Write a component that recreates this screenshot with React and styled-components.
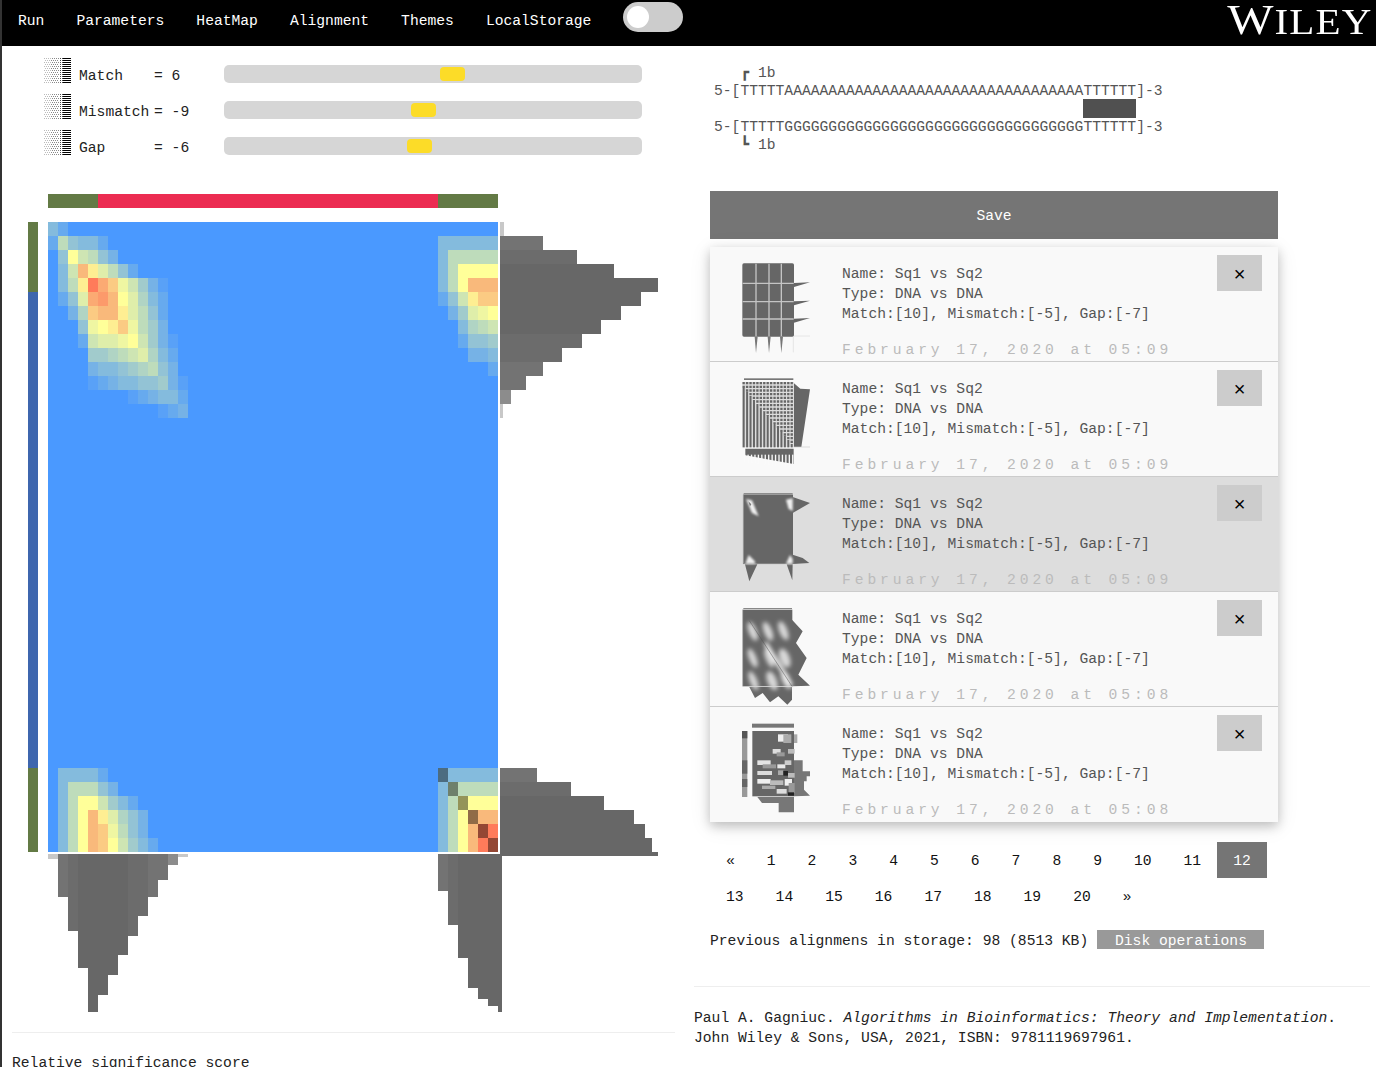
import React from 'react';
import styled, { createGlobalStyle } from 'styled-components';

const GlobalStyle = createGlobalStyle`
  html, body {
    margin: 0;
    height: 100%;
    overflow: hidden;
    background: #fff;
  }
  body {
    font-family: "Liberation Mono", monospace;
    font-size: 14.67px;
    line-height: 20px;
    color: #222;
  }
`;

const Page = styled.div`
  border-left: 2px solid #333;
  min-height: 1067px;
`;

const Nav = styled.nav`
  display: flex;
  align-items: flex-start;
  height: 46px;
  background: #000;
  color: #fff;
`;

const NavItem = styled.a`
  padding: 11px 16px 0;
  line-height: 20px;
`;

const Toggle = styled.div`
  width: 60px;
  height: 30px;
  margin: 2px 0 0 16px;
  padding: 4px;
  box-sizing: border-box;
  border-radius: 15px;
  background: #ccc;
`;

const Knob = styled.div`
  width: 22px;
  height: 22px;
  border-radius: 50%;
  background: #fff;
`;

const Logo = styled.div`
  margin-left: auto;
  margin-right: 3px;
  font-family: "Liberation Serif", serif;
  font-size: 36px;
  line-height: 40px;
  letter-spacing: 1px;
  transform: scaleX(1.14);
  transform-origin: right center;
  span {
    font-size: 43px;
  }
`;

const Columns = styled.div`
  display: flex;
`;

const LeftColumn = styled.section`
  width: 692px;
  flex: none;
`;

const RightColumn = styled.section`
  width: 676px;
  flex: none;
`;

const Sliders = styled.div`
  display: flex;
  flex-direction: column;
  gap: 10px;
  padding: 12px 0 0 42px;
`;

const SliderRow = styled.div`
  display: flex;
  align-items: flex-start;
  height: 26px;
`;

const SliderLabel = styled.span`
  width: 75px;
  margin: 8px 0 0 8px;
  white-space: pre;
`;

const SliderValue = styled.span`
  width: 70px;
  margin-top: 8px;
  white-space: pre;
`;

const Track = styled.div`
  display: flex;
  align-items: center;
  width: 418px;
  height: 18px;
  margin-top: 7px;
  border-radius: 5px;
  background: #d6d6d6;
`;

const Thumb = styled.div`
  width: 25px;
  height: 14px;
  margin-left: ${(p) => p.$offset}px;
  border-radius: 4px;
  background: #fcdc28;
`;

const Chart = styled.div`
  display: grid;
  grid-template-columns: 10px 10px 450px 162px;
  grid-template-rows: 14px 14px 630px 160px;
  margin: 38px 0 0 26px;
`;

const TopStrip = styled.div`
  grid-column: 3;
  grid-row: 1;
  display: flex;
`;

const LeftStrip = styled.div`
  grid-column: 1;
  grid-row: 3;
  display: flex;
  flex-direction: column;
`;

const StripPart = styled.div`
  flex: ${(p) => p.$cells};
  background: ${(p) => p.$color};
`;

const HeatSvg = styled.svg`
  grid-column: 3;
  grid-row: 3;
  display: block;
`;

const RightHist = styled.svg`
  grid-column: 4;
  grid-row: 3;
  display: block;
  overflow: visible;
`;

const BottomHist = styled.svg`
  grid-column: 3 / span 2;
  grid-row: 4;
  display: block;
  margin-top: 2px;
`;

const Rule = styled.hr`
  height: 1px;
  border: none;
  background: #eee;
  margin: ${(p) => p.$margin};
`;

const Caption = styled.div`
  padding-left: 10px;
  color: #222;
`;

const AlignBlock = styled.pre`
  margin: 18px 0 0 20px;
  font: inherit;
  line-height: 18px;
  color: #555;
`;

const Bond = styled.span`
  display: inline-block;
  width: 8.8px;
  height: 17px;
  margin-top: -1px;
  vertical-align: top;
  background: #505050;
  box-shadow: 0 1px 0 #505050, 0 2px 0 #505050;
`;

const SaveButton = styled.button`
  display: block;
  width: 568px;
  height: 48px;
  margin: 37px 0 0 16px;
  padding: 2px 0 0;
  border: none;
  background: #757575;
  color: #fff;
  font: inherit;
`;

const SavedList = styled.div`
  width: 568px;
  margin: 8px 0 0 16px;
  box-shadow: 0 4px 10px rgba(0, 0, 0, 0.2), 0 4px 20px rgba(0, 0, 0, 0.1);
`;

const SavedItem = styled.div`
  display: flex;
  align-items: flex-start;
  height: 115px;
  box-sizing: border-box;
  padding: 16px 16px 0 32px;
  background: ${(p) => (p.$selected ? '#ddd' : '#f9f9f9')};
  border-bottom: ${(p) => (p.$last ? 'none' : '1px solid #ccc')};
`;

const ThumbSvg = styled.svg`
  display: block;
  flex: none;
  width: 68px;
  height: 90px;
  margin-right: 32px;
  overflow: visible;
  filter: blur(${(p) => p.$blur || 0.45}px);
`;

const ItemText = styled.div`
  margin-top: 1px;
  color: #555;
  white-space: nowrap;
`;

const ItemDate = styled.div`
  margin-top: 16px;
  color: #bbb;
  letter-spacing: 3.9px;
`;

const CloseButton = styled.button`
  width: 45px;
  height: 36px;
  margin: -8px 0 0 auto;
  padding: 2px 0 0;
  border: none;
  background: #ccc;
  color: #000;
  font-family: "Liberation Sans", sans-serif;
  font-size: 20px;
`;

const Pagination = styled.div`
  display: flex;
  flex-wrap: wrap;
  width: 568px;
  margin: 20px 0 0 16px;
`;

const PageLink = styled.a`
  padding: 9px 16px 7px;
  color: ${(p) => (p.$active ? '#fff' : '#111')};
  background: ${(p) => (p.$active ? '#757575' : 'transparent')};
`;

const StorageLine = styled.div`
  display: flex;
  align-items: flex-start;
  height: 19px;
  line-height: 22px;
  margin: 16px 0 0 16px;
  white-space: pre;
`;

const DiskButton = styled.span`
  height: 19px;
  margin-left: 8.8px;
  padding: 0 17px 0 18px;
  background: #999;
  color: #fff;
`;

const Citation = styled.p`
  margin: 21px 0 0;
  color: #222;
`;

// colour ramp of the score matrix, 0 = blue, 20 = red
const STOPS = [
  [0, [0x4a, 0x99, 0xff]],
  [8, [0xbe, 0xdc, 0xbb]],
  [12, [0xff, 0xff, 0x99]],
  [16, [0xf9, 0xb9, 0x7b]],
  [20, [0xff, 0x7b, 0x5a]],
];

function rampColor(v) {
  for (let i = 1; i < STOPS.length; i++) {
    if (v <= STOPS[i][0]) {
      const [a, ca] = STOPS[i - 1];
      const [b, cb] = STOPS[i];
      const t = (v - a) / (b - a);
      const c = ca.map((x, k) => Math.round(x + (cb[k] - x) * t));
      return `rgb(${c.join(',')})`;
    }
  }
  return 'rgb(255,123,90)';
}

// [row, first column, values]
const HEAT = [
  [0, 0, [4, 2]],
  [1, 0, [2, 8, 5, 4, 4, 2]],
  [2, 1, [5, 12, 9, 8, 5, 3]],
  [3, 1, [4, 9, 16, 13, 10, 8, 5, 2]],
  [4, 1, [4, 8, 13, 20, 17, 15, 11, 9, 6, 3, 1]],
  [5, 1, [2, 5, 10, 17, 18, 16, 12, 10, 7, 4, 2]],
  [6, 2, [3, 7, 15, 16, 16, 13, 10, 8, 5, 2]],
  [7, 3, [5, 11, 12, 13, 15, 11, 8, 6, 3]],
  [8, 3, [2, 9, 10, 10, 11, 12, 9, 6, 3, 1]],
  [9, 4, [6, 6, 7, 8, 9, 10, 7, 4, 2]],
  [10, 4, [3, 4, 4, 5, 6, 7, 8, 5, 3]],
  [11, 4, [1, 2, 3, 4, 4, 5, 5, 6, 3, 1]],
  [12, 8, [1, 2, 3, 4, 4, 2]],
  [13, 11, [1, 2, 3]],
  [1, 39, [4, 4, 4, 4, 4, 4]],
  [2, 39, [4, 8, 8, 8, 8, 8]],
  [3, 39, [4, 8, 12, 12, 12, 12]],
  [4, 39, [4, 8, 12, 16, 16, 16]],
  [5, 39, [2, 5, 9, 13, 15, 15]],
  [6, 40, [3, 6, 10, 11, 12]],
  [7, 41, [4, 7, 8, 9]],
  [8, 41, [2, 5, 5, 6]],
  [9, 42, [3, 3, 4]],
  [10, 44, [2]],
  [39, 1, [4, 4, 4, 4, 2]],
  [40, 1, [4, 8, 8, 8, 5, 3]],
  [41, 1, [4, 8, 12, 12, 9, 6, 4, 2]],
  [42, 1, [4, 8, 12, 16, 13, 10, 7, 5, 3]],
  [43, 1, [4, 8, 12, 16, 15, 11, 8, 5, 3]],
  [44, 1, [4, 8, 12, 16, 15, 12, 9, 6, 4, 2]],
  [39, 39, [4, 4, 4, 4, 4, 4]],
  [40, 39, [4, 8, 8, 8, 8, 8]],
  [41, 39, [4, 8, 12, 12, 12, 12]],
  [42, 39, [4, 8, 12, 16, 16, 16]],
  [43, 39, [4, 8, 12, 16, 20, 20]],
  [44, 39, [4, 8, 12, 16, 20, 20]],
];

const HIST_START = [43, 77, 114, 158, 141, 121, 101, 82, 62, 43, 26, 11, 3];
const HIST_END = [37, 71, 104, 134, 145, 152];

function barColor(v) {
  if (v < 6) return '#c8c8c8';
  if (v < 15) return '#8c8c8c';
  if (v < 50) return '#737373';
  if (v < 90) return '#6c6c6c';
  return '#676767';
}

function HeatMap() {
  const path = [0, 1, 2, 3, 4, 5];
  return (
    <HeatSvg width="450" height="630" shapeRendering="crispEdges">
      <rect width="450" height="630" fill="#4a99ff" />
      {HEAT.map(([row, col, vals]) =>
        vals.map((v, i) => (
          <rect key={`${row}-${col + i}`} x={(col + i) * 10} y={row * 14} width="10" height="14" fill={rampColor(v)} />
        ))
      )}
      {path.map((i) => (
        <rect key={i} x={(39 + i) * 10} y={(39 + i) * 14} width="10" height="14" fill="#000" opacity="0.42" />
      ))}
    </HeatSvg>
  );
}

function RowHistogram() {
  return (
    <RightHist width="162" height="630" shapeRendering="crispEdges">
      <rect x="2" y="0" width="4" height="14" fill="#c8c8c8" />
      {HIST_START.map((v, i) => (
        <rect key={i} x="2" y={(i + 1) * 14} width={v} height="14" fill={barColor(v)} />
      ))}
      {HIST_END.map((v, i) => (
        <rect key={i} x="2" y={(i + 39) * 14} width={v} height="14" fill={barColor(v)} />
      ))}
      <rect x="2" y="630" width="158" height="4" fill="#676767" />
    </RightHist>
  );
}

function ColumnHistogram() {
  return (
    <BottomHist width="612" height="158" shapeRendering="crispEdges">
      <rect x="0" y="0" width="10" height="5" fill="#c8c8c8" />
      {HIST_START.map((v, i) => (
        <rect key={i} x={(i + 1) * 10} y="0" width="10" height={v} fill={barColor(v)} />
      ))}
      {HIST_END.map((v, i) => (
        <rect key={i} x={(i + 39) * 10} y="0" width="10" height={v} fill={barColor(v)} />
      ))}
      <rect x="450" y="0" width="4" height="158" fill="#676767" />
    </BottomHist>
  );
}

function ditherPixels() {
  const out = [];
  for (let y = 0; y < 26; y += 2) {
    for (let x = 0; x < 27; x++) {
      let on;
      let fill = '#000';
      if (x >= 19) on = true;
      else if (x >= 15) {
        on = x % 2 === 0 || x > 17;
        fill = '#444';
      } else {
        on = (x + y / 2) % 2 === 0;
        fill = x < 7 ? '#bbb' : '#888';
      }
      if (on) out.push({ x, y, fill });
    }
  }
  return out;
}

const DITHER = ditherPixels();

function DitherIcon() {
  return (
    <svg width="27" height="26" shapeRendering="crispEdges" style={{ flex: 'none' }}>
      {DITHER.map((p) => (
        <rect key={`${p.x}-${p.y}`} x={p.x} y={p.y} width="1" height="1" fill={p.fill} />
      ))}
    </svg>
  );
}

// thumbnails use a 204x270 box, three units a pixel
function ThumbGrid() {
  const cols = [42, 81, 118];
  const rows = [61, 116, 168];
  return (
    <ThumbSvg viewBox="0 0 204 270">
      <rect x="1" y="1" width="155" height="220" rx="5" fill="#666" />
      {cols.map((x) => (
        <g key={x}>
          <line x1={x} y1="2" x2={x} y2="220" stroke="#c4c4c4" strokeWidth="4" />
          <polygon points={`${x - 4},221 ${x + 5},221 ${x},270`} fill="#777" />
        </g>
      ))}
      {rows.map((y) => (
        <g key={y}>
          <line x1="2" y1={y} x2="155" y2={y} stroke="#c4c4c4" strokeWidth="4" />
          <polygon points={`156,${y + 11} 156,${y - 1} 204,${y - 3}`} fill="#666" />
        </g>
      ))}
      <line x1="156" y1="219" x2="204" y2="219" stroke="#ddd" strokeWidth="2" />
      <line x1="154" y1="221" x2="154" y2="268" stroke="#ddd" strokeWidth="2" />
    </ThumbSvg>
  );
}

function ThumbStripes() {
  const cols = Array.from({ length: 15 }, (_, i) => i);
  return (
    <ThumbSvg viewBox="0 0 204 270">
      <rect x="6" y="1" width="148" height="5" fill="#777" />
      <polygon points="156,16 175,32 204,34 178,207 156,207" fill="#666" />
      <polygon points="10,212 155,212 155,258 10,232" fill="#666" />
      <rect x="1" y="12" width="155" height="196" fill="#ddd" />
      {cols.map((i) => {
        const x = 2 + i * 10.3;
        const cut = 30 + i * 12;
        return (
          <g key={i}>
            <rect x={x} y={cut} width="6" height={208 - cut} fill="#666" />
            <line x1={x + 3} y1="12" x2={x + 3} y2={cut} stroke="#666" strokeWidth="7" strokeDasharray="7 4" />
            <rect x={x + 4} y="230" width="4" height={i * 1.2 + 22} fill="#fafafa" />
          </g>
        );
      })}
      <line x1="156" y1="207" x2="204" y2="207" stroke="#ccc" strokeWidth="2" />
    </ThumbSvg>
  );
}

function ThumbBlock() {
  return (
    <ThumbSvg viewBox="0 0 204 270">
      <defs>
        <filter id="soft3">
          <feGaussianBlur stdDeviation="3.5" />
        </filter>
      </defs>
      <rect x="5" y="1" width="147" height="3" fill="#666" />
      <rect x="3" y="5" width="150" height="208" fill="#666" />
      <line x1="4" y1="5" x2="4" y2="212" stroke="#aaa" strokeWidth="2.5" />
      <line x1="4" y1="212" x2="152" y2="212" stroke="#999" strokeWidth="2" />
      <polygon points="152,12 204,30 152,60" fill="#666" />
      <polygon points="152,185 182,195 202,210 152,213" fill="#666" />
      <polygon points="9,214 46,214 22,265" fill="#666" />
      <polygon points="134,214 152,214 151,262" fill="#666" />
      <g filter="url(#soft3)" fill="#f0f0f0">
        <polygon points="12,18 30,22 50,70 30,60" />
        <polygon points="132,20 152,16 152,54 140,48" />
        <polygon points="10,212 20,186 38,204 40,212" />
        <polygon points="132,212 144,186 152,198 152,212" />
      </g>
      <polygon points="19,25 28,34 24,40" fill="#777" />
    </ThumbSvg>
  );
}

function ThumbWaves() {
  const blobs = [
    [32, 70, 6],
    [78, 70, 6],
    [124, 68, 6],
    [32, 150, 5],
    [82, 150, 5],
    [128, 150, 9],
    [34, 218, 5],
    [90, 218, 8],
    [132, 215, 6],
  ];
  return (
    <ThumbSvg viewBox="0 0 204 270">
      <defs>
        <filter id="soft4">
          <feGaussianBlur stdDeviation="7" />
        </filter>
      </defs>
      <rect x="4" y="0" width="146" height="3" fill="#888" />
      <rect x="2" y="5" width="149" height="230" fill="#666" />
      <line x1="2" y1="5" x2="2" y2="235" stroke="#aaa" strokeWidth="2" />
      <polygon points="150,35 182,70 162,105 194,150 169,200 204,233 150,235" fill="#666" />
      <polygon points="22,237 150,237 150,275 136,290 109,265 84,283 62,255 39,270" fill="#666" />
      <g filter="url(#soft4)" fill="#d8d8d8">
        {blobs.map(([x, y, w]) => (
          <ellipse key={`${x}-${y}`} cx={x} cy={y} rx={w + 6} ry="30" transform={`rotate(-22 ${x} ${y})`} />
        ))}
        <line x1="70" y1="105" x2="148" y2="232" stroke="#f4f4f4" strokeWidth="12" />
      </g>
      <line x1="22" y1="38" x2="150" y2="235" stroke="#555" strokeWidth="1.5" />
    </ThumbSvg>
  );
}

function ThumbTable() {
  const blocks = [
    [108, 34, 30, 22, '#eee'],
    [124, 34, 24, 26, '#aaa'],
    [92, 78, 24, 14, '#ddd'],
    [104, 88, 24, 12, '#999'],
    [138, 78, 20, 14, '#bbb'],
    [46, 112, 40, 14, '#e4e4e4'],
    [62, 124, 40, 12, '#999'],
    [106, 124, 24, 12, '#e8e8e8'],
    [128, 112, 20, 14, '#ccc'],
    [46, 144, 44, 12, '#ddd'],
    [108, 142, 16, 14, '#aaa'],
    [124, 144, 14, 14, '#222'],
    [138, 150, 20, 14, '#bbb'],
    [46, 168, 40, 14, '#eee'],
    [84, 172, 40, 14, '#bbb'],
    [128, 168, 22, 20, '#f0f0f0'],
    [60, 188, 40, 10, '#aaa'],
    [104, 198, 30, 14, '#ddd'],
    [140, 180, 18, 30, '#999'],
    [138, 208, 18, 10, '#222'],
  ];
  return (
    <ThumbSvg viewBox="0 0 204 270" $blur={0.7}>
      <rect x="30" y="2" width="126" height="12" fill="#777" />
      <rect x="0" y="24" width="16" height="198" fill="#999" />
      <rect x="0" y="24" width="16" height="22" fill="#555" />
      <rect x="0" y="112" width="16" height="40" fill="#666" />
      <rect x="0" y="168" width="16" height="24" fill="#666" />
      <rect x="31" y="24" width="125" height="196" fill="#666" />
      <polygon points="156,34 166,34 166,60 156,60" fill="#aaa" />
      <polygon points="156,112 182,112 182,145 204,145 204,160 194,160 194,175 186,175 186,200 204,218 156,220" fill="#777" />
      <polygon points="46,222 156,222 156,268 110,268 110,240 60,240" fill="#777" />
      {blocks.map(([x, y, w, h, c]) => (
        <rect key={`${x}-${y}`} x={x} y={y} width={w} height={h} fill={c} />
      ))}
    </ThumbSvg>
  );
}

const SLIDERS = [
  { label: 'Match', value: '= 6', offset: 216 },
  { label: 'Mismatch', value: '= -9', offset: 187 },
  { label: 'Gap', value: '= -6', offset: 183 },
];

const SAVED = [
  { thumb: <ThumbGrid />, date: 'February 17, 2020 at 05:09' },
  { thumb: <ThumbStripes />, date: 'February 17, 2020 at 05:09' },
  { thumb: <ThumbBlock />, date: 'February 17, 2020 at 05:09', selected: true },
  { thumb: <ThumbWaves />, date: 'February 17, 2020 at 05:08' },
  { thumb: <ThumbTable />, date: 'February 17, 2020 at 05:08', last: true },
];

const PAGES = ['«', ...Array.from({ length: 20 }, (_, i) => String(i + 1)), '»'];

export default function App() {
  const spaces = ' '.repeat(42);
  return (
    <Page>
      <GlobalStyle />
      <Nav>
        <NavItem>Run</NavItem>
        <NavItem>Parameters</NavItem>
        <NavItem>HeatMap</NavItem>
        <NavItem>Alignment</NavItem>
        <NavItem>Themes</NavItem>
        <NavItem>LocalStorage</NavItem>
        <Toggle>
          <Knob />
        </Toggle>
        <Logo>
          <span>W</span>ILEY
        </Logo>
      </Nav>
      <Columns>
        <LeftColumn>
          <Sliders>
            {SLIDERS.map((s) => (
              <SliderRow key={s.label}>
                <DitherIcon />
                <SliderLabel>{s.label}</SliderLabel>
                <SliderValue>{s.value}</SliderValue>
                <Track>
                  <Thumb $offset={s.offset} />
                </Track>
              </SliderRow>
            ))}
          </Sliders>
          <Chart>
            <TopStrip>
              <StripPart $cells={5} $color="#637a45" />
              <StripPart $cells={34} $color="#ec2c52" />
              <StripPart $cells={6} $color="#637a45" />
            </TopStrip>
            <LeftStrip>
              <StripPart $cells={5} $color="#637a45" />
              <StripPart $cells={34} $color="#3e66ae" />
              <StripPart $cells={6} $color="#637a45" />
            </LeftStrip>
            <HeatMap />
            <RowHistogram />
            <ColumnHistogram />
          </Chart>
          <Rule $margin="20px 19px 0 10px" />
          <Caption>
            <br />
            Relative significance score
          </Caption>
        </LeftColumn>
        <RightColumn>
          <AlignBlock>
            {'   ┏ 1b\n'}
            {'5-[TTTTT' + 'A'.repeat(34) + 'TTTTTT]-3\n'}
            {spaces}
            {[0, 1, 2, 3, 4, 5].map((i) => (
              <Bond key={i} />
            ))}
            {'\n'}
            {'5-[TTTTT' + 'G'.repeat(34) + 'TTTTTT]-3\n'}
            {'   ┗ 1b'}
          </AlignBlock>
          <SaveButton>Save</SaveButton>
          <SavedList>
            {SAVED.map((item, i) => (
              <SavedItem key={i} $selected={item.selected} $last={item.last}>
                {item.thumb}
                <ItemText>
                  <div>Name: Sq1 vs Sq2</div>
                  <div>Type: DNA vs DNA</div>
                  <div>Match:[10], Mismatch:[-5], Gap:[-7]</div>
                  <ItemDate>{item.date}</ItemDate>
                </ItemText>
                <CloseButton>×</CloseButton>
              </SavedItem>
            ))}
          </SavedList>
          <Pagination>
            {PAGES.map((p) => (
              <PageLink key={p} $active={p === '12'}>
                {p}
              </PageLink>
            ))}
          </Pagination>
          <StorageLine>
            Previous alignmens in storage: 98 (8513 KB)
            <DiskButton>Disk operations</DiskButton>
          </StorageLine>
          <Rule $margin="37px 0 0 0" />
          <Citation>
            Paul A. Gagniuc. <i>Algorithms in Bioinformatics: Theory and Implementation</i>.
            <br />
            John Wiley &amp; Sons, USA, 2021, ISBN: 9781119697961.
          </Citation>
        </RightColumn>
      </Columns>
    </Page>
  );
}
